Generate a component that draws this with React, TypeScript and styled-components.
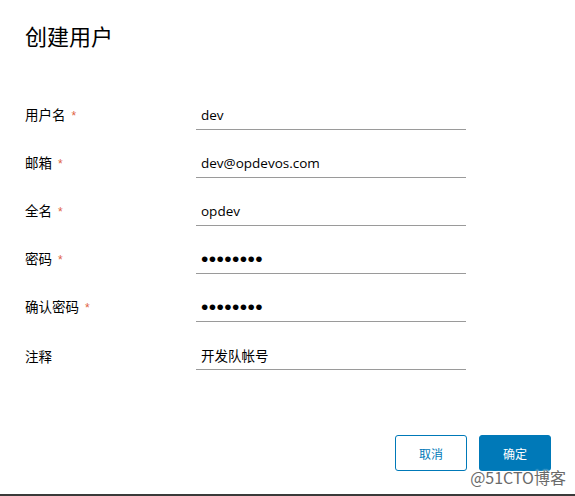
import React from 'react'
import styled, { createGlobalStyle } from 'styled-components'

const GlobalStyle = createGlobalStyle`
  html, body {
    margin: 0;
    padding: 0;
    background: #ffffff;
  }
  body {
    font-family: "Open Sans", "Noto Sans CJK SC", sans-serif;
    color: #000;
  }
`

const Modal = styled.div`
  position: relative;
  box-sizing: border-box;
  width: 575px;
  height: 496px;
  padding: 20px 24px 0 25px;
  display: flex;
  flex-direction: column;
  background: #fff;
  border-bottom: 2px solid #3a3a3a;
`

const Title = styled.h3`
  margin: 0;
  font-family: "Noto Sans CJK SC", sans-serif;
  font-size: 22px;
  font-weight: 400;
  line-height: 30px;
  color: #000;
`

const Form = styled.div`
  margin-top: 32px;
  display: flex;
  flex-direction: column;
`

const Row = styled.div`
  display: grid;
  grid-template-columns: 171px 270px;
  align-items: end;
  height: 48px;
`

const Label = styled.label`
  font-family: "Noto Sans CJK SC", sans-serif;
  font-size: 13.5px;
  line-height: 24px;
  padding-bottom: 2px;
  color: #000;
`

const Required = styled.span`
  margin-left: 6px;
  color: #e0623f;
  font-family: "Liberation Sans", sans-serif;
  font-size: 12px;
`

const Input = styled.input<{ $secret?: boolean }>`
  box-sizing: border-box;
  width: 270px;
  height: 26px;
  padding: 0 5px 3px;
  border: none;
  border-bottom: 1px solid #9a9a9a;
  outline: none;
  background: transparent;
  font-family: ${({ $secret }) => ($secret ? '"Liberation Sans"' : '"Open Sans"')}, "Noto Sans CJK SC", sans-serif;
  font-size: ${({ $secret }) => ($secret ? '21px' : '13.5px')};
  letter-spacing: ${({ $secret }) => ($secret ? '0.4px' : '0')};
  color: #000;
`

const Footer = styled.div`
  margin-top: auto;
  margin-bottom: 23px;
  display: flex;
  justify-content: flex-end;
  gap: 12px;
`

const Button = styled.button<{ $primary?: boolean }>`
  box-sizing: border-box;
  width: 72px;
  height: 36px;
  border-radius: 3px;
  border: 1px solid #0079b8;
  background: ${({ $primary }) => ($primary ? '#0079b8' : '#fff')};
  color: ${({ $primary }) => ($primary ? '#fff' : '#0079b8')};
  font-family: "Noto Sans CJK SC", sans-serif;
  font-size: 12px;
  cursor: pointer;
`

const Watermark = styled.div`
  position: absolute;
  right: 9px;
  bottom: 8px;
  font-family: "Noto Sans CJK SC", sans-serif;
  font-size: 16px;
  line-height: 18px;
  color: #6a6a6a;
  text-shadow: 0 0 2px #fff, 0 0 2px #fff;
`

const fields = [
  { label: '用户名', value: 'dev', required: true },
  { label: '邮箱', value: 'dev@opdevos.com', required: true },
  { label: '全名', value: 'opdev', required: true },
  { label: '密码', value: '12345678', required: true, secret: true },
  { label: '确认密码', value: '12345678', required: true, secret: true },
  { label: '注释', value: '开发队帐号', required: false },
]

export default function App() {
  return (
    <>
      <GlobalStyle />
      <Modal>
        <Title>创建用户</Title>
        <Form>
          {fields.map((f) => (
            <Row key={f.label}>
              <Label>
                {f.label}
                {f.required && <Required>*</Required>}
              </Label>
              <Input
                type={f.secret ? 'password' : 'text'}
                $secret={f.secret}
                defaultValue={f.value}
                readOnly
              />
            </Row>
          ))}
        </Form>
        <Footer>
          <Button>取消</Button>
          <Button $primary>确定</Button>
        </Footer>
        <Watermark>@51CTO博客</Watermark>
      </Modal>
    </>
  )
}
